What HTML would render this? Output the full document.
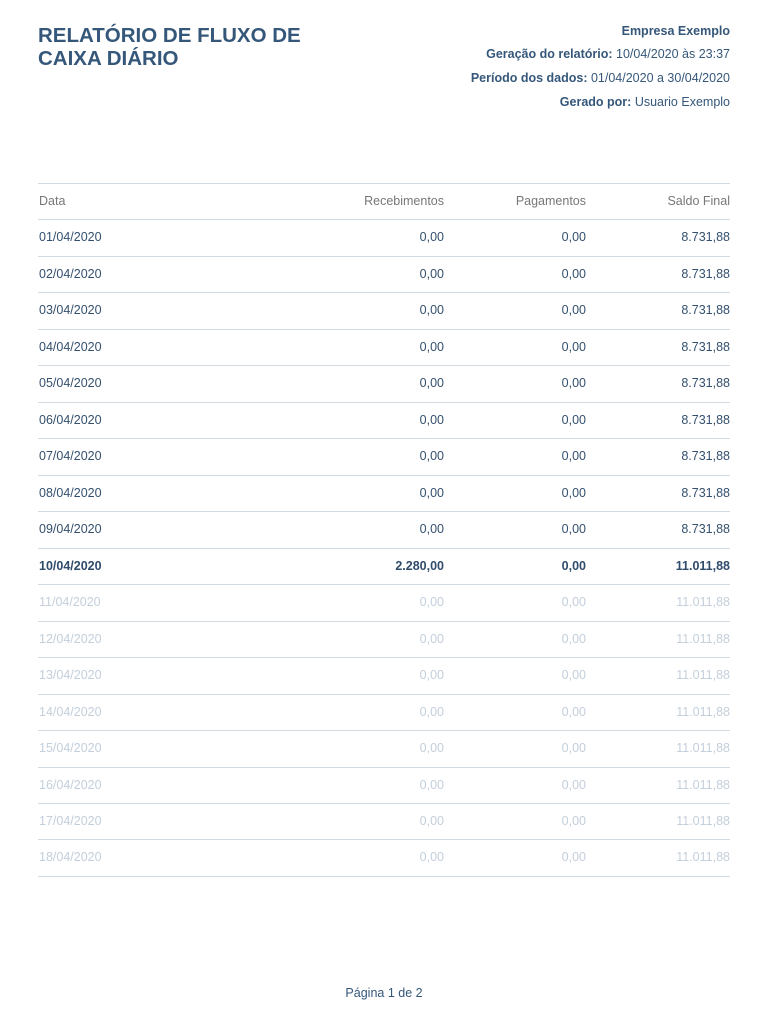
<!DOCTYPE html>
<html><head><meta charset="utf-8"><style>
body{margin:0;width:768px;height:1024px;background:#fff;font-family:"Liberation Sans",Arial,sans-serif;color:#34506e;position:relative;overflow:hidden}
h1{position:absolute;left:38px;top:24px;margin:0;font-size:20.5px;line-height:23px;font-weight:bold;color:#35577a}
.meta{position:absolute;right:38px;font-size:12.5px;color:#35577a;text-align:right;white-space:nowrap}
.meta b{font-weight:bold}
.r{position:absolute;left:38px;width:692px;height:36.47px;border-top:1px solid #d3dbe3;box-sizing:border-box;font-size:12.5px}
.r span{position:absolute;top:0;line-height:35px}
.c0{left:1px}.c1{right:286px}.c2{right:144px}.c3{right:0}
.h{color:#777}
.b{font-weight:bold;color:#2f4c6b}
.f{color:#c3cfdb}
.end{position:absolute;left:38px;width:692px;top:876px;border-top:1px solid #d3dbe3}
.foot{position:absolute;left:0;width:768px;top:986px;text-align:center;font-size:12.5px;color:#35577a}
</style></head><body>
<h1>RELATÓRIO DE FLUXO DE<br>CAIXA DIÁRIO</h1>
<div class="meta" style="top:24px"><b>Empresa Exemplo</b></div>
<div class="meta" style="top:47px"><b>Geração do relatório:</b> 10/04/2020 às 23:37</div>
<div class="meta" style="top:71px"><b>Período dos dados:</b> 01/04/2020 a 30/04/2020</div>
<div class="meta" style="top:95px"><b>Gerado por:</b> Usuario Exemplo</div>

<div class="r h" style="top:183px"><span class="c0">Data</span><span class="c1">Recebimentos</span><span class="c2">Pagamentos</span><span class="c3">Saldo Final</span></div>
<div class="r" style="top:219.47px"><span class="c0">01/04/2020</span><span class="c1">0,00</span><span class="c2">0,00</span><span class="c3">8.731,88</span></div>
<div class="r" style="top:255.94px"><span class="c0">02/04/2020</span><span class="c1">0,00</span><span class="c2">0,00</span><span class="c3">8.731,88</span></div>
<div class="r" style="top:292.41px"><span class="c0">03/04/2020</span><span class="c1">0,00</span><span class="c2">0,00</span><span class="c3">8.731,88</span></div>
<div class="r" style="top:328.88px"><span class="c0">04/04/2020</span><span class="c1">0,00</span><span class="c2">0,00</span><span class="c3">8.731,88</span></div>
<div class="r" style="top:365.35px"><span class="c0">05/04/2020</span><span class="c1">0,00</span><span class="c2">0,00</span><span class="c3">8.731,88</span></div>
<div class="r" style="top:401.82px"><span class="c0">06/04/2020</span><span class="c1">0,00</span><span class="c2">0,00</span><span class="c3">8.731,88</span></div>
<div class="r" style="top:438.29px"><span class="c0">07/04/2020</span><span class="c1">0,00</span><span class="c2">0,00</span><span class="c3">8.731,88</span></div>
<div class="r" style="top:474.76px"><span class="c0">08/04/2020</span><span class="c1">0,00</span><span class="c2">0,00</span><span class="c3">8.731,88</span></div>
<div class="r" style="top:511.23px"><span class="c0">09/04/2020</span><span class="c1">0,00</span><span class="c2">0,00</span><span class="c3">8.731,88</span></div>
<div class="r b" style="top:547.7px"><span class="c0">10/04/2020</span><span class="c1">2.280,00</span><span class="c2">0,00</span><span class="c3">11.011,88</span></div>
<div class="r f" style="top:584.17px"><span class="c0">11/04/2020</span><span class="c1">0,00</span><span class="c2">0,00</span><span class="c3">11.011,88</span></div>
<div class="r f" style="top:620.64px"><span class="c0">12/04/2020</span><span class="c1">0,00</span><span class="c2">0,00</span><span class="c3">11.011,88</span></div>
<div class="r f" style="top:657.11px"><span class="c0">13/04/2020</span><span class="c1">0,00</span><span class="c2">0,00</span><span class="c3">11.011,88</span></div>
<div class="r f" style="top:693.58px"><span class="c0">14/04/2020</span><span class="c1">0,00</span><span class="c2">0,00</span><span class="c3">11.011,88</span></div>
<div class="r f" style="top:730.05px"><span class="c0">15/04/2020</span><span class="c1">0,00</span><span class="c2">0,00</span><span class="c3">11.011,88</span></div>
<div class="r f" style="top:766.52px"><span class="c0">16/04/2020</span><span class="c1">0,00</span><span class="c2">0,00</span><span class="c3">11.011,88</span></div>
<div class="r f" style="top:802.99px"><span class="c0">17/04/2020</span><span class="c1">0,00</span><span class="c2">0,00</span><span class="c3">11.011,88</span></div>
<div class="r f" style="top:839.46px"><span class="c0">18/04/2020</span><span class="c1">0,00</span><span class="c2">0,00</span><span class="c3">11.011,88</span></div>
<div class="end"></div>
<div class="foot">Página 1 de 2</div>
</body></html>
